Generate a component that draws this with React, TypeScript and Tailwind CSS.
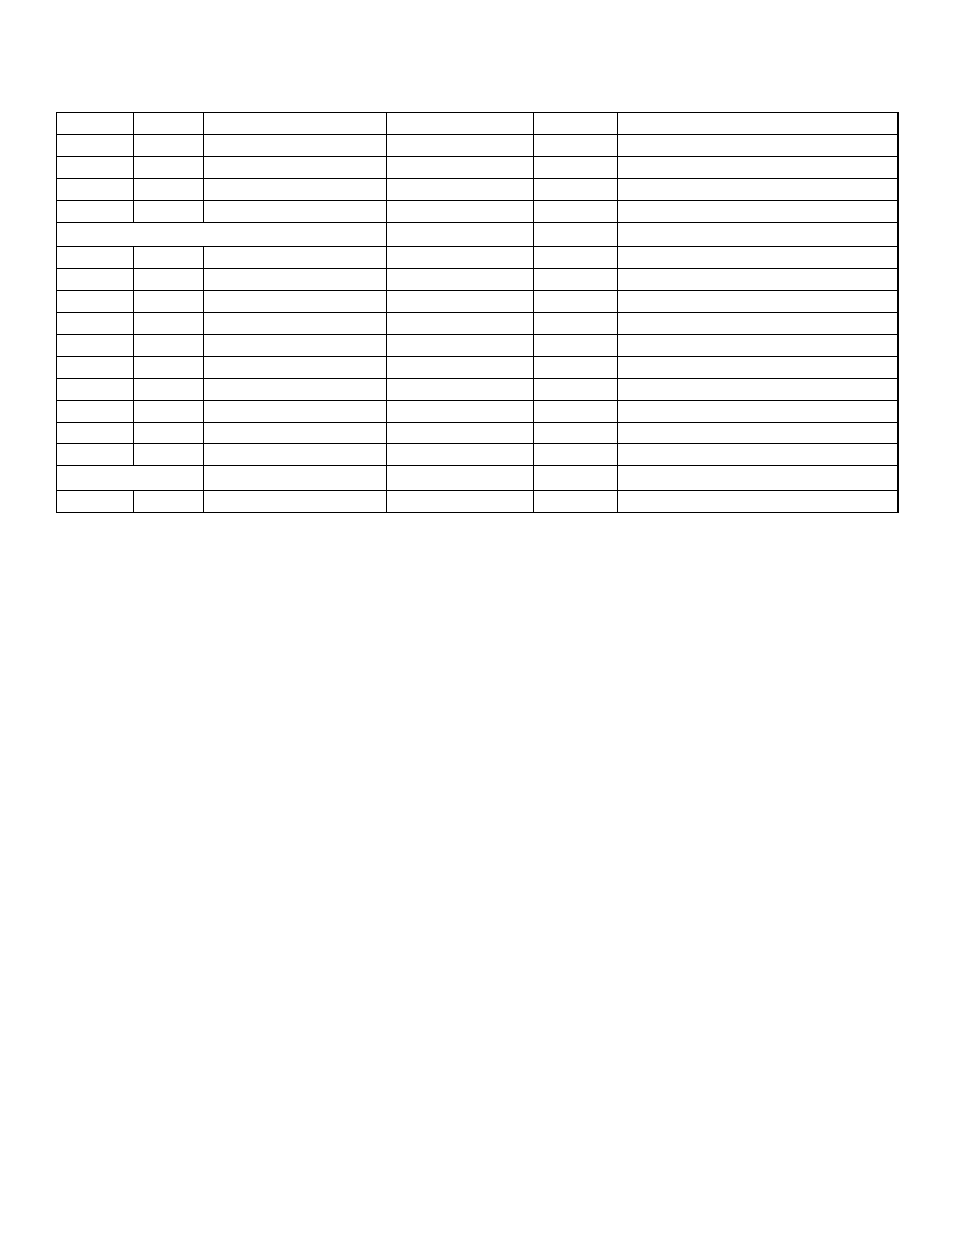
// Row heights of the cells between the 1px rules; span = merged leading columns
const rows: { h: string; span?: 2 | 3 }[] = [
  { h: "h-[21px]" },
  { h: "h-[21px]" },
  { h: "h-[21px]" },
  { h: "h-[21px]" },
  { h: "h-[21px]" },
  { h: "h-[23px]", span: 3 },
  { h: "h-[21px]" },
  { h: "h-[21px]" },
  { h: "h-[21px]" },
  { h: "h-[21px]" },
  { h: "h-[21px]" },
  { h: "h-[21px]" },
  { h: "h-[21px]" },
  { h: "h-[21px]" },
  { h: "h-[20px]" },
  { h: "h-[21px]" },
  { h: "h-[24px]", span: 2 },
  { h: "h-[21px]" },
];

const App = () => {
  return (
    <div className="min-h-[1235px] bg-white pt-[112px] pl-[56px] font-['Liberation_Sans',sans-serif]">
      {/* grid lines come from the black background showing through the gaps */}
      <div className="grid w-fit grid-cols-[76px_69px_182px_146px_83px_279px] gap-px bg-black p-px pr-[2px]">
        {rows.map((row, r) => {
          const cells = [];
          if (row.span === 3) {
            cells.push(<div key={`${r}-m`} className={`col-span-3 bg-white ${row.h}`} />);
          } else if (row.span === 2) {
            cells.push(<div key={`${r}-m`} className={`col-span-2 bg-white ${row.h}`} />);
          }
          const rest = 6 - (row.span || 0);
          for (let c = 0; c < rest; c++) {
            cells.push(<div key={`${r}-${c}`} className={`bg-white ${row.h}`} />);
          }
          return cells;
        })}
      </div>
    </div>
  );
};

export default App;
